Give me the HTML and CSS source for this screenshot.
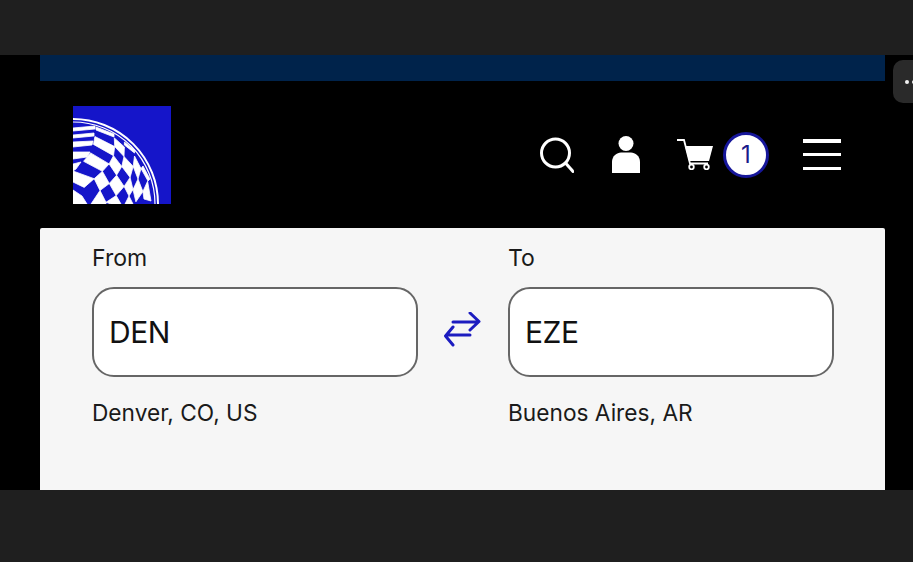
FILE: index.html
```html
<!DOCTYPE html>
<html lang="en">
<head>
  <title>Flight search</title>
  <link rel="stylesheet" href="styles.css">
</head>
<body>
  <div class="band-top"></div>
  <main class="screen">
    <div class="side-pill"><span class="dot"></span><span class="dot"></span></div>
    <div class="page">
      <div class="promo-bar"></div>
      <header class="site-header">
        <svg class="logo" viewBox="0 0 98 98" aria-label="Airline logo">
          <rect class="logo-bg" width="98" height="98"/>
          <circle class="logo-rim" cx="0" cy="98" r="85" stroke-width="2"/>
          <circle class="logo-rim" cx="0" cy="98" r="82" stroke-width="1.200"/>
          <g class="logo-tiles">
            <!-- outer rungs near the pole -->
            <polygon points="0,22 22,20 22,23 0,25"/>
            <polygon points="0,29 21,27 21,30 0,32"/>
            <polygon points="0,36 20,35 19,39 0,41"/>
            <polygon points="0,46 17,46 14,51 0,53"/>
            <polygon points="0,58 8,56 3,63 0,65"/>
            <!-- first column -->
            <polygon points="23,21 41,28 41,31 23,24"/>
            <polygon points="21.900,30.500 41.700,40.600 40.500,49.700 20.500,38.400"/>
            <polygon points="17.600,46.900 36.100,57.900 29.400,65.300 10.600,55.300"/>
            <polygon points="0,65 21.200,72.700 11.200,81.400 0,76"/>
            <!-- middle columns -->
            <polygon points="41.300,31.900 51.400,41 51,50.500 41.700,40.600"/>
            <polygon points="40.500,49.700 48.800,60.500 43.600,69.200 36.100,57.900"/>
            <polygon points="29.400,65.300 36.300,77.500 27,84.500 21.200,72.700"/>
            <polygon points="51,50.500 60.200,60.400 57.100,71.400 48.800,60.500"/>
            <polygon points="43.600,69.200 51.100,80.400 43.200,89.600 36.300,77.500"/>
            <polygon points="27,84.500 33,96.300 33,98 18,98"/>
            <polygon points="61.500,50 68,62.600 65,73 60.200,60.400"/>
            <polygon points="57.100,71.400 60,83.600 56,90 51.100,80.400"/>
            <polygon points="43.200,89.600 48,98 38,98 33,96.300"/>
            <polygon points="65,73 69.900,85.600 62.900,95.800 60,83.600"/>
            <polygon points="56,90 60,98 52,98"/>
            <polygon points="74.600,75.200 78,95 71,93 69.900,85.600"/>
            <polygon points="51.400,36 61.500,44 61.500,47 51.400,39"/>
            <polygon points="70,60 77,73 75,75 68,62.600"/>
            <polygon points="0,84 9,90 14,98 0,98"/>
          </g>
        </svg>
        <nav class="header-icons">
          <svg class="icon-search" viewBox="0 0 34 36">
            <circle cx="15.500" cy="16" r="14"/>
            <path d="M25.500 26L33 34.500"/>
          </svg>
          <svg class="icon-person" viewBox="0 0 28 37">
            <circle cx="14" cy="7.500" r="7.500"/>
            <path d="M0 37V26C0 20 5 16.500 9 16.500H19C23 16.500 28 20 28 26V37Z"/>
          </svg>
          <svg class="icon-cart" viewBox="0 0 36 31">
            <path class="cart-stroke" d="M0 1H7L13 24.500H31"/>
            <path class="cart-body" d="M8 7H36L32 22H12Z"/>
            <circle class="cart-stroke" cx="14.500" cy="28" r="2.300"/>
            <circle class="cart-stroke" cx="29.500" cy="28" r="2.300"/>
          </svg>
          <span class="cart-count">1</span>
          <button class="menu-btn" aria-label="Menu"><span></span><span></span><span></span></button>
        </nav>
      </header>
      <section class="search-card">
        <div class="route">
          <div class="airport">
            <label class="airport-label">From</label>
            <div class="airport-field">DEN</div>
            <p class="airport-name">Denver, CO, US</p>
          </div>
          <svg class="icon-swap" viewBox="0 0 38 36">
            <path d="M9 10H34M26 1L35 9.500L26 18"/>
            <path d="M26 23H3M9 15L1.500 24L9 33"/>
          </svg>
          <div class="airport">
            <label class="airport-label">To</label>
            <div class="airport-field">EZE</div>
            <p class="airport-name">Buenos Aires, AR</p>
          </div>
        </div>
      </section>
    </div>
  </main>
  <div class="band-bottom"></div>
</body>
</html>
```
FILE: styles.css
```css
body{
  margin: 0;
  height: 562px;
  overflow: hidden;
  display: flex;
  flex-direction: column;
  background-color: #000000;
  font-family: Inter, "Liberation Sans", sans-serif;
  color: #1a1a1a;
}

.band-top{
  height: 55px;
  background-color: #1f1f1f;
}

.band-bottom{
  height: 72px;
  background-color: #1f1f1f;
}

.screen{
  position: relative;
  height: 435px;
  padding: 0 28px 0 40px;
  overflow: hidden;
}

.page{
  display: flex;
  flex-direction: column;
  height: 100%;
}

.side-pill{
  position: absolute;
  top: 5px;
  right: -10px;
  width: 30px;
  height: 43px;
  box-sizing: border-box;
  padding-left: 12px;
  display: flex;
  align-items: center;
  gap: 3px;
  background-color: #2a2a2a;
  border-radius: 10px;
}

.dot{
  width: 4px;
  height: 4px;
  border-radius: 50%;
  background-color: #f2f2f2;
}

.promo-bar{
  height: 26px;
  background-color: #00234b;
}

.site-header{
  height: 147px;
  display: flex;
  align-items: center;
  justify-content: space-between;
  padding: 0 44px 0 33px;
}

.logo{
  width: 98px;
  height: 98px;
}

.logo-bg{
  fill: #1515c9;
}

.logo-rim{
  fill: none;
  stroke: #ffffff;
}

.logo-tiles{
  fill: #ffffff;
  stroke: #ffffff;
  stroke-width: 0.8;
  stroke-linejoin: round;
}

.header-icons{
  display: flex;
  align-items: center;
}

.icon-search{
  width: 34px;
  height: 36px;
  margin-right: 38px;
  fill: none;
  stroke: #ffffff;
  stroke-width: 3;
  stroke-linecap: round;
}

.icon-person{
  width: 28px;
  height: 37px;
  margin-right: 37px;
  fill: #ffffff;
}

.icon-cart{
  width: 36px;
  height: 31px;
  margin-right: 10px;
}

.cart-stroke{
  fill: none;
  stroke: #ffffff;
  stroke-width: 1.800;
}

.cart-body{
  fill: #ffffff;
}

.cart-count{
  width: 46px;
  height: 46px;
  box-sizing: border-box;
  margin-right: 34px;
  display: flex;
  align-items: center;
  justify-content: center;
  background-color: #ffffff;
  border: 3px solid #16169a;
  border-radius: 50%;
  font-size: 24px;
  color: #1a1a8a;
}

.menu-btn{
  width: 38px;
  height: 31px;
  padding: 0;
  border: 0;
  background: none;
  display: flex;
  flex-direction: column;
  justify-content: space-between;
}

.menu-btn span{
  height: 3.500px;
  background-color: #ffffff;
}

.search-card{
  flex: 1;
  background-color: #f6f6f6;
  border-radius: 2px 2px 0 0;
  padding: 15px 52px 0;
}

.route{
  display: grid;
  grid-template-columns: 326px 90px 326px;
  align-items: start;
}

.airport-label{
  display: block;
  font-size: 23px;
  line-height: 30px;
}

.airport-field{
  height: 90px;
  box-sizing: border-box;
  margin-top: 14px;
  padding-left: 15px;
  display: flex;
  align-items: center;
  background-color: #ffffff;
  border: 2px solid #666666;
  border-radius: 22px;
  font-size: 30px;
  letter-spacing: -0.5px;
  color: #111111;
}

.airport-name{
  margin: 21px 0 0;
  font-size: 22.700px;
  line-height: 30px;
}

.icon-swap{
  width: 38px;
  height: 36px;
  margin: 69px 0 0 26px;
  fill: none;
  stroke: #1c1cc0;
  stroke-width: 3;
  stroke-linecap: round;
  stroke-linejoin: round;
}
```
